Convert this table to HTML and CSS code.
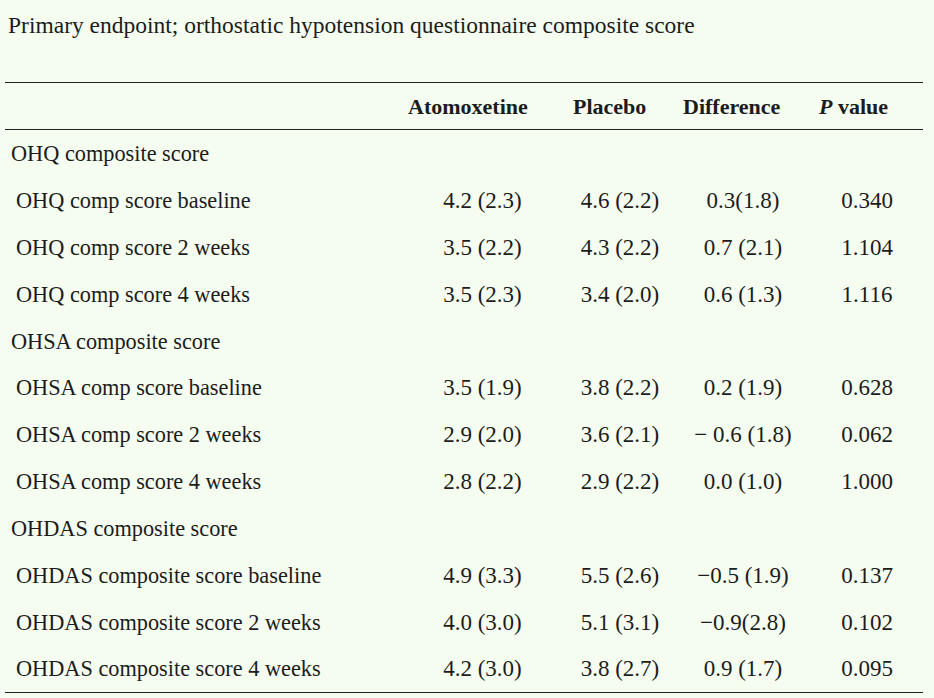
FILE: index.html
```html
<!DOCTYPE html>
<html>
<head>
<meta charset="utf-8">
<link rel="stylesheet" href="styles.css">
</head>
<body>
<p class="title">Primary endpoint; orthostatic hypotension questionnaire composite score</p>
<table class="tbl">
  <colgroup>
    <col class="c-label"><col class="c-a"><col class="c-b"><col class="c-c"><col class="c-d">
  </colgroup>
  <thead>
    <tr><th></th><th>Atomoxetine</th><th>Placebo</th><th>Difference</th><th><i>P</i> value</th></tr>
  </thead>
  <tbody>
    <tr><td class="grp" colspan="5">OHQ composite score</td></tr>
    <tr><td class="sub">OHQ comp score baseline</td><td>4.2 (2.3)</td><td>4.6 (2.2)</td><td>0.3(1.8)</td><td>0.340</td></tr>
    <tr><td class="sub">OHQ comp score 2 weeks</td><td>3.5 (2.2)</td><td>4.3 (2.2)</td><td>0.7 (2.1)</td><td>1.104</td></tr>
    <tr><td class="sub">OHQ comp score 4 weeks</td><td>3.5 (2.3)</td><td>3.4 (2.0)</td><td>0.6 (1.3)</td><td>1.116</td></tr>
    <tr><td class="grp" colspan="5">OHSA composite score</td></tr>
    <tr><td class="sub">OHSA comp score baseline</td><td>3.5 (1.9)</td><td>3.8 (2.2)</td><td>0.2 (1.9)</td><td>0.628</td></tr>
    <tr><td class="sub">OHSA comp score 2 weeks</td><td>2.9 (2.0)</td><td>3.6 (2.1)</td><td>− 0.6 (1.8)</td><td>0.062</td></tr>
    <tr><td class="sub">OHSA comp score 4 weeks</td><td>2.8 (2.2)</td><td>2.9 (2.2)</td><td>0.0 (1.0)</td><td>1.000</td></tr>
    <tr><td class="grp" colspan="5">OHDAS composite score</td></tr>
    <tr><td class="sub">OHDAS composite score baseline</td><td>4.9 (3.3)</td><td>5.5 (2.6)</td><td>−0.5 (1.9)</td><td>0.137</td></tr>
    <tr><td class="sub">OHDAS composite score 2 weeks</td><td>4.0 (3.0)</td><td>5.1 (3.1)</td><td>−0.9(2.8)</td><td>0.102</td></tr>
    <tr><td class="sub">OHDAS composite score 4 weeks</td><td>4.2 (3.0)</td><td>3.8 (2.7)</td><td>0.9 (1.7)</td><td>0.095</td></tr>
  </tbody>
</table>
</body>
</html>
```

FILE: styles.css
```css
html, body {
  margin: 0;
  padding: 0;
  background: #f4fdf0;
}
body {
  font-family: "Liberation Serif", "Times New Roman", serif;
  font-size: 22.3px;
  color: #1c1c1c;
  width: 934px;
  height: 698px;
  overflow: hidden;
}
.title {
  margin: 0;
  padding: 10px 0 0 8px;
  font-size: 23.5px;
  line-height: 31px;
  height: 41px;
  box-sizing: border-box;
}
.tbl {
  margin: 41px 0 0 5px;
  width: 918px;
  border-collapse: collapse;
  table-layout: fixed;
  border-top: 1px solid #222;
  border-bottom: 1px solid #222;
}
.c-label { width: 395px; }
.c-a { width: 165px; }
.c-b { width: 110px; }
.c-c { width: 136px; }
.c-d { width: 112px; }
.tbl th {
  font-size: 22px;
  font-weight: bold;
  text-align: left;
  padding: 1px 0 0 8px;
  height: 47px;
  box-sizing: border-box;
  border-bottom: 1px solid #222;
  white-space: nowrap;
}
.tbl td {
  height: 46.9px;
  box-sizing: border-box;
  padding: 2px 0 0 0;
  font-size: 23px;
  text-align: center;
  white-space: nowrap;
}
.tbl td.grp,
.tbl td.sub {
  font-size: 22.3px;
  text-align: left;
}
.tbl td.grp {
  padding-left: 6px;
}
.tbl td.sub {
  padding-left: 11px;
}
```
